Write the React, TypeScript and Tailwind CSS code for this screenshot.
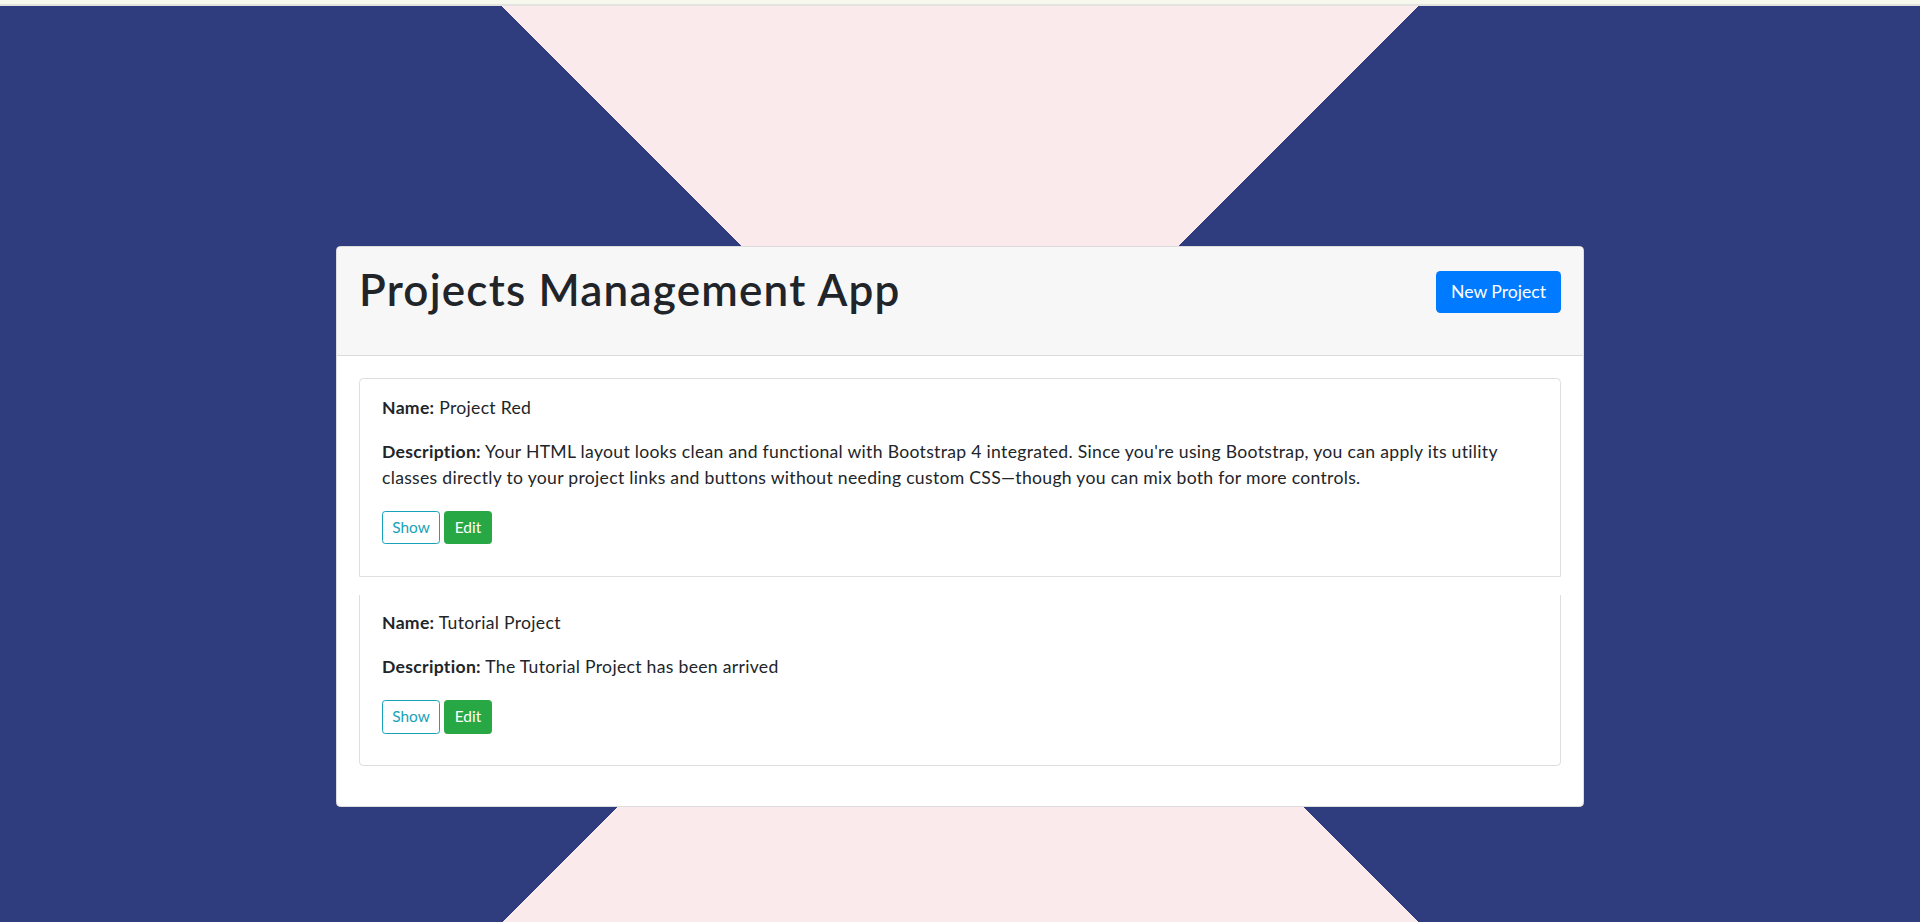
const projects = [
  {
    id: 1,
    name: "Project Red",
    description:
      "Your HTML layout looks clean and functional with Bootstrap 4 integrated. Since you're using Bootstrap, you can apply its utility classes directly to your project links and buttons without needing custom CSS—though you can mix both for more controls.",
  },
  {
    id: 2,
    name: "Tutorial Project",
    description: "The Tutorial Project has been arrived",
  },
];

export default function App() {
  return (
    <div className="min-h-screen flex flex-col font-['Segoe_UI',Lato,sans-serif] text-[#212529]">
      <div className="h-[6px] bg-[#f7f9ef] border-b-2 border-[#e3e3df]" />
      <main className="flex-1 bg-[image:conic-gradient(from_-45deg,#fbeaeb_0deg_90deg,#2f3c7e_90deg_180deg,#fbeaeb_180deg_270deg,#2f3c7e_270deg_360deg)] pt-[240px] pb-[110px]">
        <div className="w-[1248px] mx-auto bg-white border border-[#dcdcdc] rounded-[4.4px] overflow-hidden">
          <div className="h-[109px] flex justify-between items-start bg-[#f7f7f7] border-b border-[#dcdcdc] px-[22px] pt-[13.2px]">
            <h1 className="mt-[3px] text-[44px] leading-[1.2] font-semibold tracking-[1.2px]">
              Projects Management App
            </h1>
            <button
              type="button"
              className="mt-[11px] w-[125px] h-[42px] bg-[#007bff] text-white text-[17.6px] rounded-[4.4px]"
            >
              New Project
            </button>
          </div>

          <div className="p-[22px]">
            {projects.map((project, idx) => (
              <div
                key={project.id}
                className={
                  idx === 0
                    ? "border border-[#dfdfdf] rounded-t-[4.4px] px-[22px] pt-[15.5px] pb-[14px] mb-[17.6px]"
                    : "border border-t-0 border-[#dfdfdf] rounded-b-[4.4px] px-[22px] pt-[15.5px] pb-[14px] mb-[17.6px]"
                }
              >
                <p className="text-[17.6px] leading-[26.4px] tracking-[0.3px] mb-[17.6px]">
                  <strong className="font-bold">Name:</strong> {project.name}
                </p>
                <p className="text-[17.6px] leading-[26.4px] tracking-[0.3px] mb-[17.6px]">
                  <strong className="font-bold">Description:</strong>{" "}
                  {project.description}
                </p>
                <div className="flex gap-1 pt-[2px] mb-[17.6px]">
                  <button
                    type="button"
                    className="w-[58px] h-[33.5px] border border-[#17a2b8] text-[#17a2b8] text-[15.4px] rounded-[3.3px]"
                  >
                    Show
                  </button>
                  <button
                    type="button"
                    className="w-[48px] h-[33.5px] border border-[#28a745] bg-[#28a745] text-white text-[15.4px] rounded-[3.3px]"
                  >
                    Edit
                  </button>
                </div>
              </div>
            ))}
          </div>
        </div>
      </main>
    </div>
  );
}
